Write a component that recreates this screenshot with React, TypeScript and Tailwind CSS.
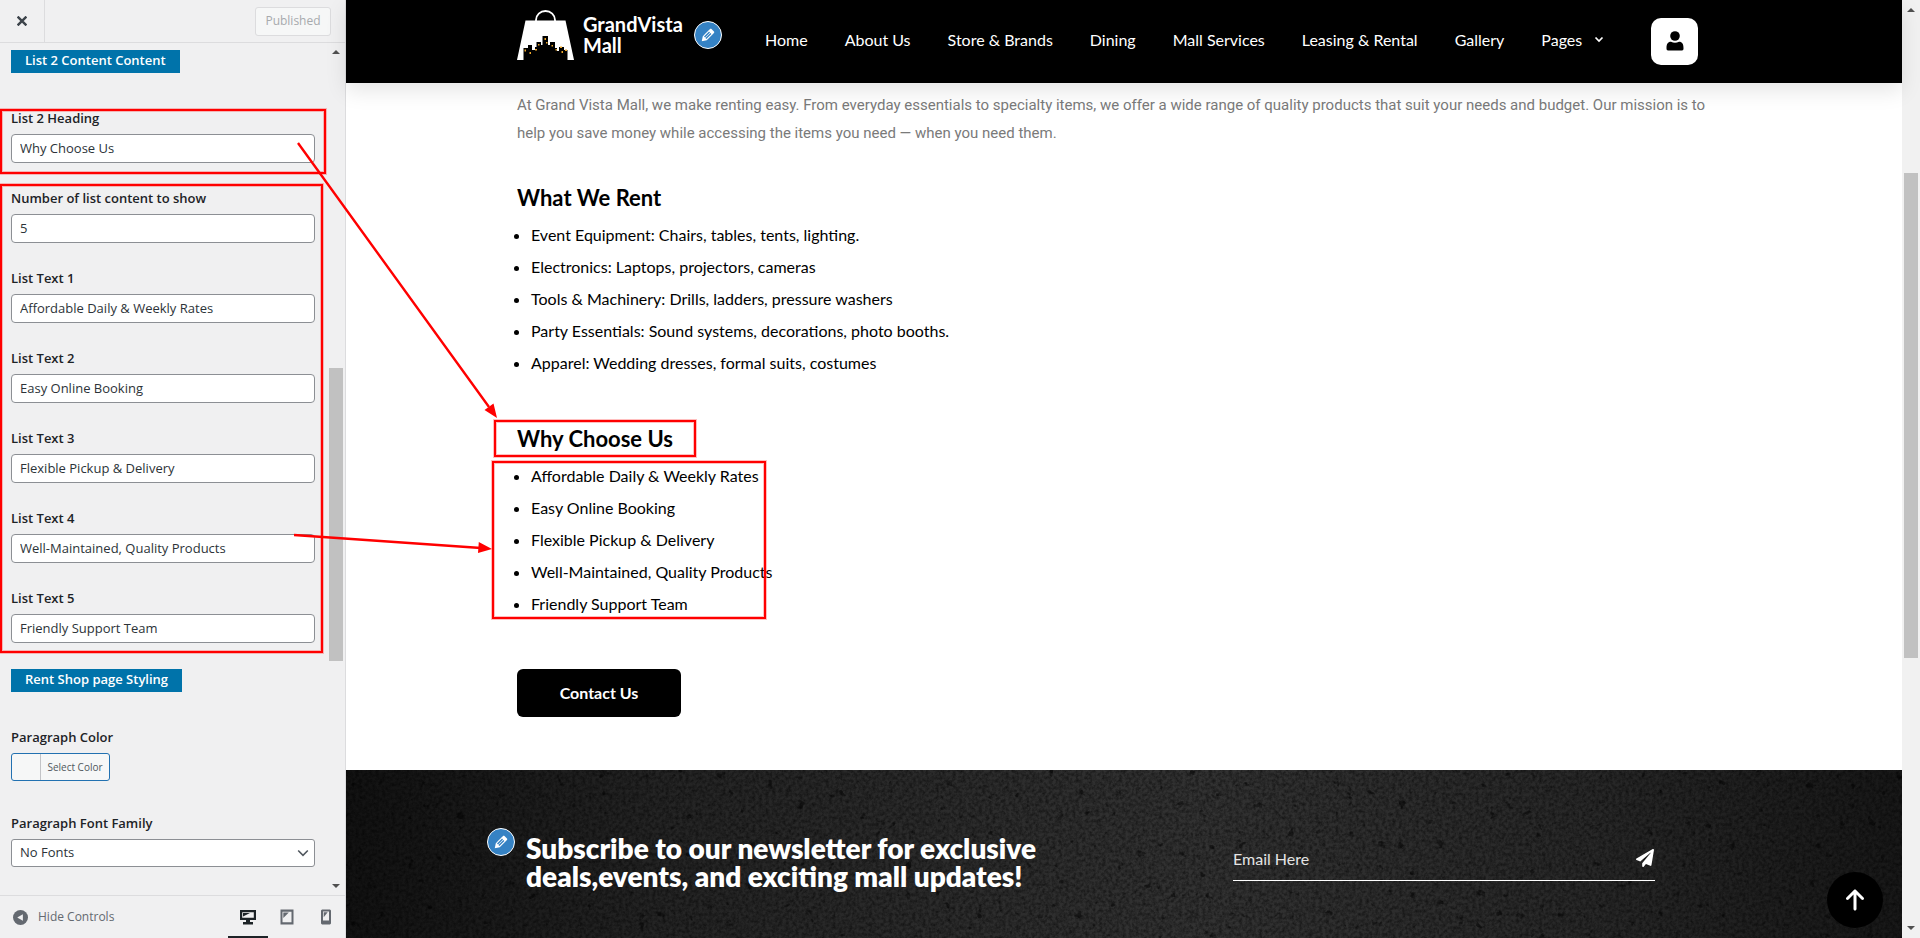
import { FaPaperPlane } from 'react-icons/fa';
import { FaArrowUp } from 'react-icons/fa6';

const LIST_FIELDS = [
  { id: 'list-heading', label: 'List 2 Heading', value: 'Why Choose Us' },
  { id: 'list-count', label: 'Number of list content to show', value: '5', type: 'number' },
  { id: 'list-text-1', label: 'List Text 1', value: 'Affordable Daily & Weekly Rates' },
  { id: 'list-text-2', label: 'List Text 2', value: 'Easy Online Booking' },
  { id: 'list-text-3', label: 'List Text 3', value: 'Flexible Pickup & Delivery' },
  { id: 'list-text-4', label: 'List Text 4', value: 'Well-Maintained, Quality Products' },
  { id: 'list-text-5', label: 'List Text 5', value: 'Friendly Support Team' },
];

const NAV = ['Home', 'About Us', 'Store & Brands', 'Dining', 'Mall Services', 'Leasing & Rental', 'Gallery'];

const SECTIONS = [
  {
    title: 'What We Rent',
    items: [
      'Event Equipment: Chairs, tables, tents, lighting.',
      'Electronics: Laptops, projectors, cameras',
      'Tools & Machinery: Drills, ladders, pressure washers',
      'Party Essentials: Sound systems, decorations, photo booths.',
      'Apparel: Wedding dresses, formal suits, costumes',
    ],
  },
  {
    title: 'Why Choose Us',
    items: [
      'Affordable Daily & Weekly Rates',
      'Easy Online Booking',
      'Flexible Pickup & Delivery',
      'Well-Maintained, Quality Products',
      'Friendly Support Team',
    ],
  },
];

function Caret({ down = false }: { down?: boolean }) {
  return (
    <svg viewBox="0 0 8 4" className="h-1 w-2 shrink-0 fill-[#505050]" aria-hidden="true">
      <path d={down ? 'M0 0h8L4 4z' : 'M0 4h8L4 0z'} />
    </svg>
  );
}

function PencilButton({ label }: { label: string }) {
  return (
    <button
      type="button"
      aria-label={label}
      className="flex size-7 shrink-0 items-center justify-center rounded-full border border-white bg-[#3582c4]"
    >
      <svg viewBox="0 0 20 20" className="size-[18px] fill-white" aria-hidden="true">
        <path d="M13.89 3.39l2.71 2.72c.46.46.42 1.24.03 1.64l-8.01 8.02-5.56 1.16 1.16-5.58s7.6-7.63 7.99-8.03c.39-.39 1.22-.39 1.68.07zm-2.73 2.79l-5.59 5.61 1.11 1.11 5.54-5.65zm-2.97 8.23l5.58-5.6-1.07-1.08-5.59 5.6z" />
      </svg>
    </button>
  );
}

function SectionBadge({ children }: { children: React.ReactNode }) {
  return (
    <h3 className="mb-[35px] flex h-[23px] w-fit items-center bg-[#0073aa] px-[14px] pb-[2px] text-[13px] font-semibold text-white">
      {children}
    </h3>
  );
}

function Sidebar() {
  return (
    <aside className="flex w-[346px] shrink-0 flex-col border-r border-[#dcdcde] bg-[#f0f0f1] font-['Open_Sans','Noto_Sans',sans-serif] text-[13px] text-[#3c434a]">
      <div className="flex h-[43px] shrink-0 items-center border-b border-[#dcdcde]">
        <button
          type="button"
          aria-label="Close"
          className="flex h-full w-[45px] items-center justify-center border-r border-[#dcdcde]"
        >
          <svg viewBox="0 0 10 10" className="size-[10px] stroke-[#3c434a] stroke-[2.4]" aria-hidden="true">
            <path d="M.6.6l8.8 8.8M9.4.6L.6 9.4" />
          </svg>
        </button>
        <button
          type="button"
          disabled
          className="mr-[14px] ml-auto h-[29px] w-[76px] rounded-[3px] border border-[#dcdcde] bg-[#f6f7f7] text-[12px] text-[#a7aaad]"
        >
          Published
        </button>
      </div>

      <div className="flex min-h-0 flex-1">
        <div className="min-w-0 flex-1 overflow-hidden pt-[7px] pr-[14px] pl-[11px]">
          <SectionBadge>List 2 Content Content</SectionBadge>
          {LIST_FIELDS.map((field) => (
            <div key={field.id} className="mb-[25px]">
              <label htmlFor={field.id} className="mb-[6px] block leading-5 font-semibold text-[#1d2327]">
                {field.label}
              </label>
              <input
                id={field.id}
                type={field.type ?? 'text'}
                defaultValue={field.value}
                className="block h-[29px] w-full rounded border border-[#8c8f94] bg-white px-2 pb-[2px] text-[#2c3338]"
              />
            </div>
          ))}
          <div className="h-px" />
          <SectionBadge>Rent Shop page Styling</SectionBadge>
          <div className="mb-8">
            <h4 className="mb-[6px] leading-5 font-semibold text-[#1d2327]">Paragraph Color</h4>
            <button
              type="button"
              className="flex h-7 w-[99px] overflow-hidden rounded-[3px] border border-[#2271b1] bg-[#f6f7f7] text-[10px] text-[#50575e]"
            >
              <span className="h-full w-[29px] shrink-0 border-r border-[#c3c4c7]" />
              <span className="flex-1 leading-[26px] whitespace-nowrap">Select Color</span>
            </button>
          </div>
          <label htmlFor="paragraph-font" className="mb-[6px] block leading-5 font-semibold text-[#1d2327]">
            Paragraph Font Family
          </label>
          <div className="relative">
            <select
              id="paragraph-font"
              className="block h-7 w-full appearance-none rounded-[3px] border border-[#8c8f94] bg-white px-2 text-[#2c3338]"
            >
              <option>No Fonts</option>
            </select>
            <svg
              viewBox="0 0 12 8"
              className="pointer-events-none absolute top-[10px] right-[6px] h-2 w-3 fill-none stroke-[#50575e] stroke-[1.6]"
              aria-hidden="true"
            >
              <path d="M1.200 1.500L6 6.300l4.800-4.800" />
            </svg>
          </div>
        </div>
        <div className="flex w-4 flex-col items-center py-[7px] pr-[2px]">
          <Caret />
          <div className="flex w-full flex-1 flex-col">
            <div className="flex-[314]" />
            <div className="flex-[293] bg-[#c1c1c1]" />
            <div className="flex-[223]" />
          </div>
          <Caret down />
        </div>
      </div>

      <div className="flex h-[43px] shrink-0 items-center border-t border-[#dcdcde] pl-[13px]">
        <button type="button" className="flex items-center gap-[10px] text-[#646970]">
          <svg viewBox="0 0 16 16" className="size-[15px]" aria-hidden="true">
            <circle cx="8" cy="8" r="8" fill="#646970" />
            <path d="M10.500 4.500v7L4.500 8z" fill="#f0f0f1" />
          </svg>
          <span className="text-[12px]">Hide Controls</span>
        </button>
        <div className="ml-auto flex h-full">
          <button
            type="button"
            aria-label="Desktop preview"
            className="flex h-full w-10 items-center justify-center border-b-2 border-[#1d2327] pt-[2px]"
          >
            <svg viewBox="0 0 16 16" className="size-4 fill-[#1d2327]" aria-hidden="true">
              <path fillRule="evenodd" d="M0 1h16v10h-6v2h3v2.500H3V13h3v-2H0zm2.200 2.200v5.600h11.600V3.200z" />
              <path d="M3 4h7L3 7.500z" />
            </svg>
          </button>
          <button type="button" aria-label="Tablet preview" className="flex h-full w-[38px] items-center justify-center">
            <svg viewBox="0 0 14 16" className="h-4 w-[14px] fill-[#646970]" aria-hidden="true">
              <path fillRule="evenodd" d="M.500.500h13v15H.500zM2.500 2.700v10.600h9V2.700z" />
              <path d="M3.300 3.500h5.500l-5.500 5.500z" />
            </svg>
          </button>
          <button type="button" aria-label="Mobile preview" className="flex h-full w-[39px] items-center justify-center">
            <svg viewBox="0 0 10 16" className="h-4 w-[10px] fill-[#646970]" aria-hidden="true">
              <path fillRule="evenodd" d="M1 .500h8l1 1v13l-1 1H1l-1-1v-13zM2 2.500v9h6v-9z" />
              <path d="M2.700 3.200h4l-4 5z" />
            </svg>
          </button>
        </div>
      </div>
    </aside>
  );
}

function MallLogo() {
  return (
    <svg viewBox="0 0 57 51" className="h-[51px] w-[57px] shrink-0" aria-hidden="true">
      <path d="M19 12V10a9.500 9 0 0 1 19 0v2" fill="none" stroke="#fff" strokeWidth="1.800" />
      <path d="M8.500 10.500h40L57 50H0z" fill="#fff" />
      <path
        d="M6.500 50V38H11v-3h4v5h3v-3h1.500v-5H24v3h1.500v-9H31v9h2v-3h5v6h2v3h2v-4h5v3h3.500v10z"
        fill="#000"
      />
      <g fill="#f0a92b">
        <path d="M7.500 39.500h1.500v2H7.500zM12.500 42H14v2h-1.500zM18 39h2v1.500h-2zM21 34h1.500v1.500H21zM27.500 28h1.500v2h-1.500zM29 32h1.500v1.500H29zM34.500 35H36v1.500h-1.500zM38.500 39H40v1.500h-1.500zM43 36.500h2V38h-2zM44.500 41H46v2h-1.500zM48 39.500h2V41h-2z" />
      </g>
    </svg>
  );
}

function SiteHeader() {
  return (
    <header className="relative z-10 h-[83px] shrink-0 bg-black text-white shadow-[0_8px_20px_rgba(0,0,0,0.1)]">
      <div className="mx-auto flex h-full max-w-[1214px] items-center pr-[33px] pb-px">
        <div className="flex w-[248px] shrink-0 items-center pb-3">
          <a href="#home" className="flex items-center gap-[9px]">
            <MallLogo />
            <span className="w-[102px] text-[20px] leading-[21px] font-bold">GrandVista Mall</span>
          </a>
          <span className="ml-[9px]">
            <PencilButton label="Edit site title" />
          </span>
        </div>
        <nav className="flex items-center gap-[37px] pb-[2px] text-[16px] whitespace-nowrap">
          {NAV.map((item) => (
            <a key={item} href="#">
              {item}
            </a>
          ))}
          <a href="#" className="flex items-center gap-3">
            Pages
            <svg viewBox="0 0 10 8" className="h-2 w-[10px] fill-none stroke-white stroke-[1.7]" aria-hidden="true">
              <path d="M1.500 1.500L5 5l3.500-3.500" />
            </svg>
          </a>
        </nav>
        <button
          type="button"
          aria-label="Account"
          className="ml-auto flex size-[47px] shrink-0 items-center justify-center rounded-[10px] bg-white"
        >
          <svg viewBox="0 0 18 20" className="h-5 w-[18px]" aria-hidden="true">
            <circle cx="9" cy="5" r="4.800" />
            <path d="M.500 17.500c0-4.500 1.200-6.700 4.500-6.700 1.500.600 2.500.900 4 .900s2.500-.300 4-.900c3.300 0 4.500 2.200 4.500 6.700 0 1.300-.500 1.900-1.500 1.900H2c-1 0-1.500-.600-1.500-1.900z" />
          </svg>
        </button>
      </div>
    </header>
  );
}

function Newsletter() {
  return (
    <footer className="relative min-h-0 flex-1 overflow-hidden bg-[#232323] text-white">
      <svg className="absolute inset-0 size-full" aria-hidden="true">
        <defs>
          <filter id="grain" x="0" y="0" width="100%" height="100%">
            <feTurbulence type="fractalNoise" baseFrequency="0.3" numOctaves="3" seed="4" />
            <feColorMatrix values="0 0 0 0 0  0 0 0 0 0  0 0 0 0 0  1.200 0 0 0 -0.400" />
          </filter>
          <filter id="specks" x="0" y="0" width="100%" height="100%">
            <feTurbulence type="fractalNoise" baseFrequency="0.1" numOctaves="3" seed="11" />
            <feColorMatrix values="0 0 0 0 0  0 0 0 0 0  0 0 0 0 0  9 0 0 0 -6.400" />
          </filter>
          <linearGradient id="vignette">
            <stop offset="0" stopColor="#121212" />
            <stop offset=".2" stopColor="#242424" />
            <stop offset=".55" stopColor="#323232" />
            <stop offset=".8" stopColor="#282828" />
            <stop offset="1" stopColor="#181818" />
          </linearGradient>
        </defs>
        <rect width="100%" height="100%" fill="url(#vignette)" />
        <rect width="100%" height="100%" filter="url(#grain)" opacity=".8" />
        <rect width="100%" height="100%" filter="url(#specks)" opacity=".5" />
      </svg>
      <div className="relative mx-auto flex max-w-[1214px] items-start justify-between pt-[64px] pr-[76px] pl-[9px]">
        <div className="relative">
          <span className="absolute -top-[6px] -left-[39px]">
            <PencilButton label="Edit newsletter" />
          </span>
          <h2 className="text-[28px] leading-7 font-extrabold whitespace-nowrap">
            Subscribe to our newsletter for exclusive
            <br />
            deals,events, and exciting mall updates!
          </h2>
        </div>
        <form className="mt-[6px] flex h-[41px] w-[422px] items-center border-b border-white pb-1">
          <input
            type="email"
            aria-label="Email Here"
            placeholder="Email Here"
            className="h-full min-w-0 flex-1 bg-transparent text-[16px] placeholder:text-[#e4e4e4] focus:outline-none"
          />
          <button type="button" aria-label="Send" className="mr-px">
            <FaPaperPlane className="size-[18px]" />
          </button>
        </form>
      </div>
      <button
        type="button"
        aria-label="Back to top"
        className="absolute right-[19px] bottom-[10px] flex size-14 items-center justify-center rounded-full bg-black"
      >
        <FaArrowUp className="size-6" />
      </button>
    </footer>
  );
}

function Preview() {
  return (
    <div className="flex min-w-0 flex-1 flex-col bg-white font-[Lato,sans-serif]">
      <SiteHeader />
      <main className="px-6 pt-2 pb-[53px]">
        <div className="mx-auto max-w-[1214px]">
          <p className="font-[Roboto,sans-serif] text-[15px] leading-7 text-[#7a7a7a]">
            At Grand Vista Mall, we make renting easy. From everyday essentials to specialty items, we offer a wide range
            of quality products that suit your needs and budget. Our mission is to help you save money while accessing
            the items you need — when you need them.
          </p>
          <div className="mt-[37px] flex flex-col gap-[46px] text-black">
            {SECTIONS.map((section) => (
              <section key={section.title}>
                <h2 className="mb-[7px] text-[22px] leading-7 font-bold">{section.title}</h2>
                <ul className="list-disc pl-[14px] text-[16px] leading-8">
                  {section.items.map((item) => (
                    <li key={item}>{item}</li>
                  ))}
                </ul>
              </section>
            ))}
          </div>
          <a
            href="#contact"
            className="mt-[49px] flex h-12 w-[164px] items-center justify-center rounded-md bg-black text-[16px] font-bold text-white"
          >
            Contact Us
          </a>
        </div>
      </main>
      <Newsletter />
    </div>
  );
}

// Callouts that tie each customizer field to the part of the page it edits
function Annotations() {
  return (
    <svg className="pointer-events-none absolute inset-0 z-20 size-full fill-none" aria-hidden="true">
      {['stroke-[#ff0000]/25 stroke-4', 'stroke-[#ff0000] stroke-2'].map((style) => (
        <g key={style} className={style}>
          <rect x="1" y="110" width="324" height="63" />
          <rect x="1" y="185" width="321" height="467" />
          <rect x="495" y="421" width="200" height="35" />
          <rect x="493" y="462" width="272" height="156" />
        </g>
      ))}
      <g className="stroke-[#ff0000] stroke-[2.4]">
        <path d="M298 143L489 407M294 535l187 13" />
      </g>
      <g className="fill-[#ff0000]">
        <path d="M497 418l-12.500-8 9-6.500zM492 549l-14 4 .800-11z" />
      </g>
    </svg>
  );
}

export default function App() {
  return (
    <div className="relative flex h-screen overflow-hidden">
      <Sidebar />
      <Preview />
      <div className="flex w-[18px] shrink-0 flex-col items-center bg-[#f1f1f1] py-2">
        <Caret />
        <div className="flex w-full flex-1 flex-col px-[2px]">
          <div className="flex-[161]" />
          <div className="flex-[485] bg-[#c1c1c1]" />
          <div className="flex-[268]" />
        </div>
        <Caret down />
      </div>
      <Annotations />
    </div>
  );
}
